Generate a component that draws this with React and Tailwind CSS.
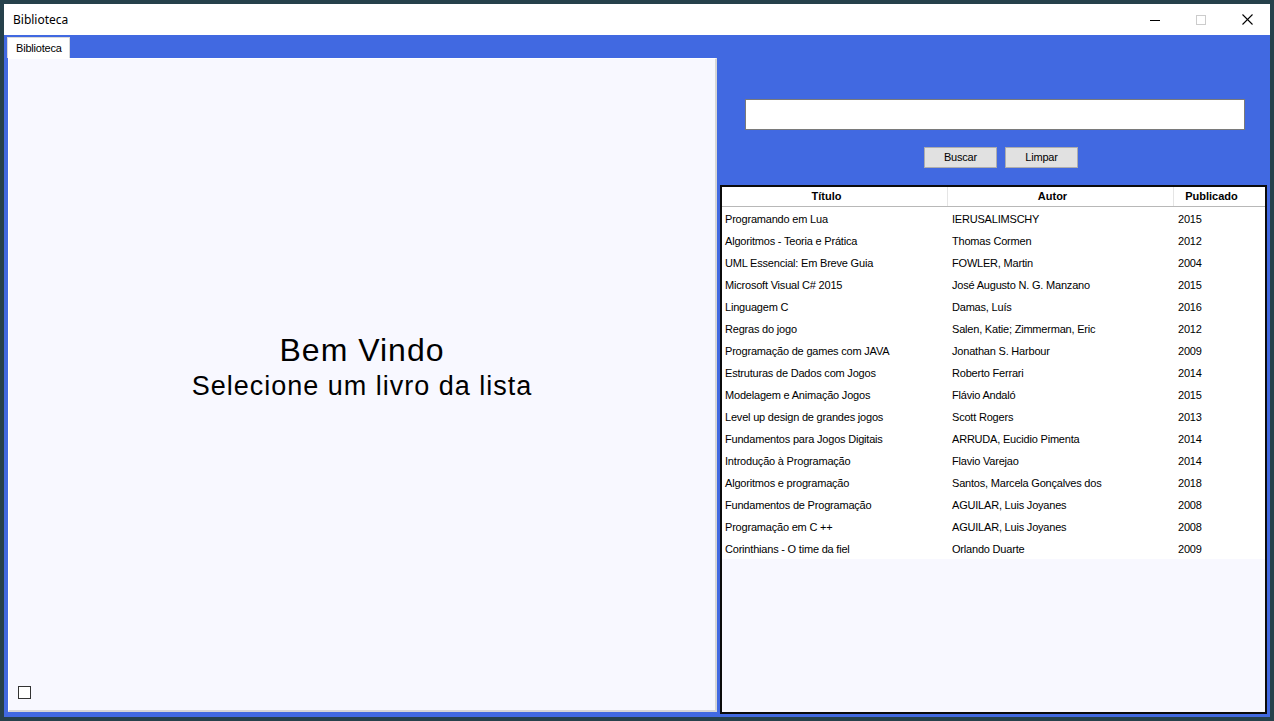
const books = [
  ["Programando em Lua", "IERUSALIMSCHY", "2015"],
  ["Algoritmos - Teoria e Prática", "Thomas Cormen", "2012"],
  ["UML Essencial: Em Breve Guia", "FOWLER, Martin", "2004"],
  ["Microsoft Visual C# 2015", "José Augusto N. G. Manzano", "2015"],
  ["Linguagem C", "Damas, Luís", "2016"],
  ["Regras do jogo", "Salen, Katie; Zimmerman, Eric", "2012"],
  ["Programação de games com JAVA", "Jonathan S. Harbour", "2009"],
  ["Estruturas de Dados com Jogos", "Roberto Ferrari", "2014"],
  ["Modelagem e Animação Jogos", "Flávio Andaló", "2015"],
  ["Level up design de grandes jogos", "Scott Rogers", "2013"],
  ["Fundamentos para Jogos Digitais", "ARRUDA, Eucidio Pimenta", "2014"],
  ["Introdução à Programação", "Flavio Varejao", "2014"],
  ["Algoritmos e programação", "Santos, Marcela Gonçalves dos", "2018"],
  ["Fundamentos de Programação", "AGUILAR, Luis Joyanes", "2008"],
  ["Programação em C ++", "AGUILAR, Luis Joyanes", "2008"],
  ["Corinthians - O time da fiel", "Orlando Duarte", "2009"],
];

const sans = { fontFamily: '"Liberation Sans", Arial, sans-serif' };

export default function App() {
  return (
    <div className="w-[1274px] h-[721px] bg-[#26414b] p-[4px] overflow-hidden" style={sans}>
      <div className="w-full h-full flex flex-col">
        {/* Title bar */}
        <div className="h-[31px] bg-white flex items-center shrink-0">
          <div
            className="pl-[9px] text-[12px] text-black flex-1"
            style={{ fontFamily: '"Noto Sans", "Open Sans", sans-serif' }}
          >
            Biblioteca
          </div>
          <div className="flex h-full">
            <div className="w-[46px] h-full flex items-center justify-center">
              <svg width="10" height="10" viewBox="0 0 10 10">
                <line x1="0" y1="5.5" x2="10" y2="5.5" stroke="#000" strokeWidth="1" />
              </svg>
            </div>
            <div className="w-[46px] h-full flex items-center justify-center">
              <svg width="10" height="10" viewBox="0 0 10 10">
                <rect x="0.5" y="0.5" width="9" height="9" fill="none" stroke="#cccccc" strokeWidth="1" />
              </svg>
            </div>
            <div className="w-[46px] h-full flex items-center justify-center">
              <svg width="11" height="11" viewBox="0 0 11 11">
                <line x1="0.5" y1="0.5" x2="10.5" y2="10.5" stroke="#000" strokeWidth="1.1" />
                <line x1="10.5" y1="0.5" x2="0.5" y2="10.5" stroke="#000" strokeWidth="1.1" />
              </svg>
            </div>
          </div>
        </div>

        {/* Body */}
        <div className="flex-1 bg-[#4169e1] flex min-h-0">
          {/* Left: tab control */}
          <div className="w-[716px] pl-[4px] flex flex-col shrink-0">
            <div className="h-[23px] flex shrink-0">
              <div className="mt-[2px] ml-[-1px] h-[21px] w-[63px] bg-white border border-b-0 border-[#d9d9d9] flex items-center pl-[8px] text-[11px] text-black tracking-[-0.2px]">
                Biblioteca
              </div>
            </div>
            <div className="w-[709px] h-[654px] bg-[#f8f8ff] border-t border-l border-r-2 border-b-2 border-t-white border-l-white border-r-[#d6d6d6] border-b-[#d6d6d6] flex flex-col">
              <div className="pt-[275px] flex flex-col items-center text-black">
                <div className="text-[32px] leading-none tracking-[1px]">Bem Vindo</div>
                <div className="mt-[7px] text-[27px] leading-none tracking-[1px]">Selecione um livro da lista</div>
              </div>
              <div className="mt-auto ml-[9px] mb-[11px] w-[13px] h-[13px] border border-[#333333] bg-white" />
            </div>
          </div>

          {/* Right column */}
          <div className="flex-1 pr-[3px] flex flex-col min-w-0">
            <div className="mt-[64px] ml-[25px] w-[500px] h-[31px] bg-white border border-[#7a7a7a] shrink-0" />
            <div className="mt-[17px] ml-[204px] flex gap-[8px] shrink-0">
              <div className="w-[73px] h-[21px] bg-[#e1e1e1] border border-[#adadad] flex items-center justify-center text-[11px] text-black tracking-[-0.2px]">
                Buscar
              </div>
              <div className="w-[73px] h-[21px] bg-[#e1e1e1] border border-[#adadad] flex items-center justify-center text-[11px] text-black tracking-[-0.2px]">
                Limpar
              </div>
            </div>
            <div className="mt-[17px] mb-[3px] flex-1 border-2 border-[#0b0b0b] bg-[#f8f8ff] flex flex-col min-h-0">
              <div className="h-[20px] bg-white border-b border-[#b8b8b8] flex text-[11px] font-bold text-black shrink-0">
                <div className="w-[226px] border-r border-[#e5e5e5] flex items-center justify-center pr-[16px]">Título</div>
                <div className="w-[226px] border-r border-[#e5e5e5] flex items-center justify-center pr-[16px]">Autor</div>
                <div className="flex-1 flex items-center justify-center pr-[16px]">Publicado</div>
              </div>
              {books.map((b, i) => (
                <div key={i} className="h-[22px] pt-[2px] bg-white flex items-center text-[11px] text-black tracking-[-0.2px] shrink-0">
                  <div className="w-[226px] pl-[3px] whitespace-nowrap overflow-hidden">{b[0]}</div>
                  <div className="w-[226px] pl-[4px] whitespace-nowrap overflow-hidden">{b[1]}</div>
                  <div className="flex-1 pl-[4px]">{b[2]}</div>
                </div>
              ))}
            </div>
          </div>
        </div>
      </div>
    </div>
  );
}
